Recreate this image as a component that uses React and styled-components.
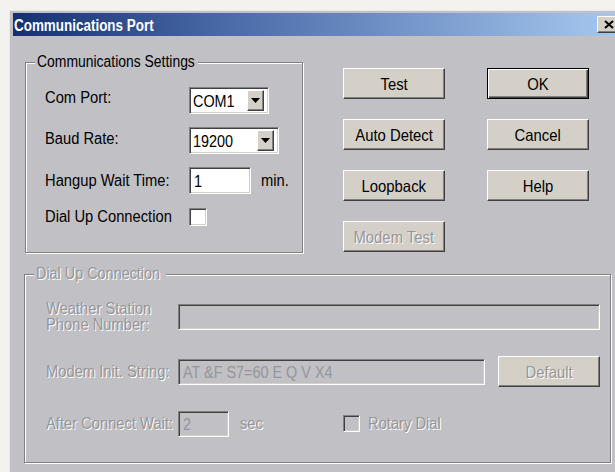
import React from 'react';
import styled, { createGlobalStyle } from 'styled-components';

const UI_FONT = '"Liberation Sans", Arial, sans-serif';
const FACE = '#c1c0c4';
const DIM = '#96959a';

const Global = createGlobalStyle`
  html, body {
    margin: 0;
    padding: 0;
    overflow: hidden;
    background: #f3f2ef;
  }
  body {
    font-family: ${UI_FONT};
  }
`;

const Desktop = styled.div`
  width: 615px;
  height: 472px;
  overflow: hidden;
  box-sizing: border-box;
  padding: 10px 0 0 9px;
`;

const Window = styled.div`
  width: 616px;
  box-sizing: border-box;
  background: ${FACE};
  border-top: 1px solid #e9e8ec;
  border-left: 1px solid #e9e8ec;
  padding: 2px 0 0 3px;
`;

/* Glyphs in this dialog are tall and narrow, so captions are squeezed sideways */
const Caption = styled.span`
  display: inline-block;
  white-space: nowrap;
  transform: scaleX(${(p) => p.$sx || 0.9});
  transform-origin: ${(p) => p.$origin || 'center'} center;
`;

const TitleBar = styled.div`
  height: 23px;
  display: flex;
  align-items: center;
  background: linear-gradient(to right, #15306f 0%, #4a6aa8 35%, #a7caf0 100%);
`;

const Title = styled.div`
  flex: 1;
  padding: 2px 0 0 1px;
  color: #fff;
  font-weight: bold;
  font-size: 16px;
`;

const CloseButton = styled.div`
  width: 22px;
  height: 17px;
  margin-right: 6px;
  box-sizing: border-box;
  background: #d4d0c8;
  border: 1px solid;
  border-color: #fff #404040 #404040 #fff;
  box-shadow: inset -1px -1px 0 #808080;
  display: flex;
  align-items: center;
  padding-left: 6px;
`;

const TopRow = styled.div`
  display: flex;
  align-items: flex-start;
  margin-top: 17px;
  padding-left: 12px;
`;

const GroupBox = styled.fieldset`
  margin: 0;
  padding: 0;
  min-width: 0;
  width: ${(p) => p.$width}px;
  box-sizing: border-box;
  border: 1px solid #808080;
  box-shadow: inset 1px 1px 0 #fff, 1px 1px 0 #fff;
`;

const Legend = styled.legend`
  width: ${(p) => p.$width}px;
  margin-left: 9px;
  padding: 0 2px;
  font-size: 16px;
  line-height: 18px;
  background: ${FACE};
  color: ${(p) => (p.$disabled ? DIM : '#000')};
  text-shadow: ${(p) => (p.$disabled ? '1px 1px 0 #fff' : 'none')};
`;

const SettingsGrid = styled.div`
  display: grid;
  grid-template-columns: 144px auto;
  grid-template-rows: 27px 27px 27px 20px;
  row-gap: 13px;
  align-items: center;
  padding: 16px 0 25px 19px;
`;

const Label = styled.div`
  font-size: 16px;
  line-height: 16px;
  padding-bottom: ${(p) => (p.$lift ? p.$lift : 0)}px;
  color: ${(p) => (p.$disabled ? DIM : '#000')};
  text-shadow: ${(p) => (p.$disabled ? '1px 1px 0 #fff' : 'none')};
  white-space: nowrap;
  transform: scaleX(0.92);
  transform-origin: left center;
`;

const sunken = `
  box-sizing: border-box;
  border: 1px solid;
  border-color: #808080 #fff #fff #808080;
  box-shadow: inset 1px 1px 0 #404040, inset -1px -1px 0 #d4d0c8;
`;

const Combo = styled.div`
  ${sunken}
  width: ${(p) => p.$width}px;
  height: 27px;
  background: #fff;
  display: flex;
  align-items: center;
  padding: 1px 4px 1px 3px;
`;

const ComboText = styled.div`
  flex: 1;
  font-size: 16px;
  padding-top: 2px;
`;

const ArrowButton = styled.div`
  width: 17px;
  height: 21px;
  box-sizing: border-box;
  background: #d4d0c8;
  border: 1px solid;
  border-color: #fff #404040 #404040 #fff;
  box-shadow: inset -1px -1px 0 #808080;
  display: flex;
  align-items: center;
  justify-content: center;
`;

const TextBox = styled.div`
  ${sunken}
  width: ${(p) => p.$width}px;
  height: ${(p) => p.$height || 27}px;
  background: ${(p) => (p.$disabled ? FACE : '#fff')};
  color: ${(p) => (p.$disabled ? DIM : '#000')};
  font-size: 16px;
  display: flex;
  align-items: center;
  padding: 2px 4px 0;
`;

const Inline = styled.div`
  display: flex;
  align-items: center;
  gap: ${(p) => p.$gap || 0}px;
`;

const CheckBox = styled.div`
  ${sunken}
  flex: none;
  width: ${(p) => p.$size}px;
  height: ${(p) => p.$size}px;
  background: ${(p) => (p.$disabled ? FACE : '#fff')};
`;

const ButtonGrid = styled.div`
  display: grid;
  grid-template-columns: 102px 102px;
  grid-auto-rows: 31px;
  column-gap: 42px;
  row-gap: 20px;
  margin: 15px 0 0 40px;
`;

const Button = styled.div`
  box-sizing: border-box;
  flex: none;
  height: 31px;
  width: 102px;
  background: #d4d0c8;
  border: 1px solid;
  border-color: ${(p) => (p.$default ? '#000' : '#fff #404040 #404040 #fff')};
  box-shadow: ${(p) =>
    p.$default
      ? 'inset 1px 1px 0 #fff, inset -1px -1px 0 #404040, inset -2px -2px 0 #808080'
      : 'inset -1px -1px 0 #808080'};
  display: flex;
  align-items: center;
  justify-content: center;
  font-size: 16.5px;
  color: ${(p) => (p.$disabled ? DIM : '#000')};
  text-shadow: ${(p) => (p.$disabled ? '1px 1px 0 #fff' : 'none')};
  padding-top: 1px;
`;

const DialUpGroup = styled(GroupBox)`
  margin: 12px 0 0 11px;
`;

const DialGrid = styled.div`
  display: grid;
  grid-template-columns: 132px 422px;
  grid-template-rows: 32px 31px 27px;
  row-gap: 23px;
  align-items: center;
  padding: 18px 0 25px 21px;
`;

const Spacer = styled.div`
  width: ${(p) => p.$w}px;
  flex: none;
`;

const Arrow = () => (
  <svg width="9" height="5" viewBox="0 0 9 5">
    <polygon points="0,0 9,0 4.5,5" fill="#000" />
  </svg>
);

const CloseGlyph = () => (
  <svg width="10" height="9" viewBox="0 0 10 9">
    <path d="M1 1 L9 8 M9 1 L1 8" stroke="#000" strokeWidth="2" />
  </svg>
);

export default function App() {
  return (
    <>
      <Global />
      <Desktop>
        <Window>
          <TitleBar>
            <Title>
              <Caption $sx={0.84} $origin="left">Communications Port</Caption>
            </Title>
            <CloseButton>
              <CloseGlyph />
            </CloseButton>
          </TitleBar>

          <TopRow>
            <GroupBox $width={278}>
              <Legend $width={159}>
                <Caption $sx={0.87} $origin="left">Communications Settings</Caption>
              </Legend>
              <SettingsGrid>
                <Label $lift={5}>Com Port:</Label>
                <Combo $width={80}>
                  <ComboText>
                    <Caption $origin="left">COM1</Caption>
                  </ComboText>
                  <ArrowButton><Arrow /></ArrowButton>
                </Combo>
                <Label $lift={3}>Baud Rate:</Label>
                <Combo $width={90}>
                  <ComboText>
                    <Caption $origin="left">19200</Caption>
                  </ComboText>
                  <ArrowButton><Arrow /></ArrowButton>
                </Combo>
                <Label>Hangup Wait Time:</Label>
                <Inline $gap={10}>
                  <TextBox $width={62}>
                    <Caption $origin="left">1</Caption>
                  </TextBox>
                  <Label>min.</Label>
                </Inline>
                <Label>Dial Up Connection</Label>
                <CheckBox $size={18} />
              </SettingsGrid>
            </GroupBox>

            <ButtonGrid>
              <Button><Caption>Test</Caption></Button>
              <Button $default><Caption>OK</Caption></Button>
              <Button><Caption>Auto Detect</Caption></Button>
              <Button><Caption>Cancel</Caption></Button>
              <Button><Caption>Loopback</Caption></Button>
              <Button><Caption>Help</Caption></Button>
              <Button $disabled><Caption>Modem Test</Caption></Button>
            </ButtonGrid>
          </TopRow>

          <DialUpGroup $width={587}>
            <Legend $disabled $width={128}>
              <Caption $sx={0.9} $origin="left">Dial Up Connection</Caption>
            </Legend>
            <DialGrid>
              <Label $disabled>
                Weather Station
                <br />
                Phone Number:
              </Label>
              <TextBox $disabled $width={422} $height={26} />
              <Label $disabled>Modem Init. String:</Label>
              <Inline $gap={13}>
                <TextBox $disabled $width={307} $height={26}>
                  <Caption $origin="left">AT &amp;F S7=60 E Q V X4</Caption>
                </TextBox>
                <Button $disabled><Caption>Default</Caption></Button>
              </Inline>
              <Label $disabled>After Connect Wait:</Label>
              <Inline>
                <TextBox $disabled $width={51} $height={26}>
                  <Caption $origin="left">2</Caption>
                </TextBox>
                <Spacer $w={11} />
                <Label $disabled>sec</Label>
                <Spacer $w={78} />
                <CheckBox $disabled $size={17} />
                <Spacer $w={8} />
                <Label $disabled>Rotary Dial</Label>
              </Inline>
            </DialGrid>
          </DialUpGroup>
          <Spacer $w={1} style={{ height: 20 }} />
        </Window>
      </Desktop>
    </>
  );
}
